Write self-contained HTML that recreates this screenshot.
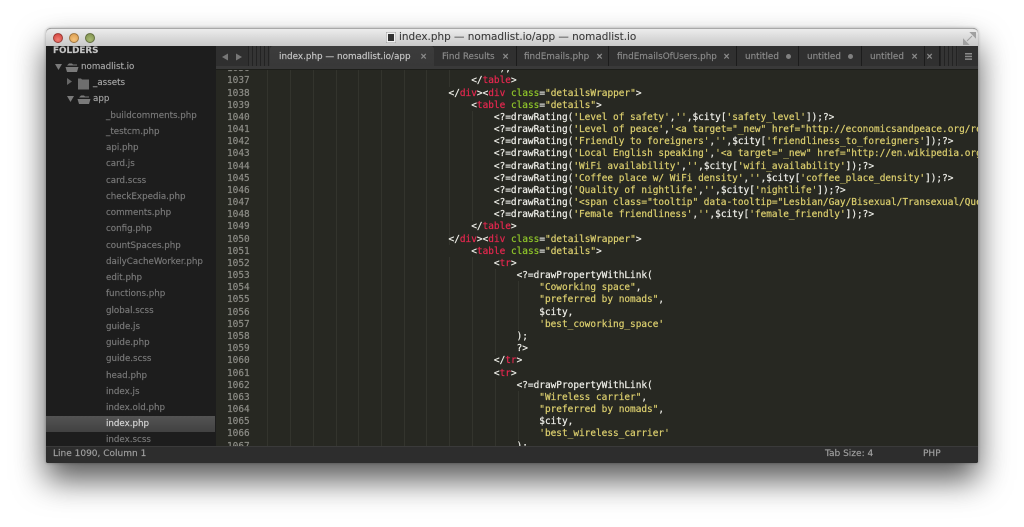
<!DOCTYPE html>
<html><head><meta charset="utf-8"><style>
*{margin:0;padding:0;box-sizing:border-box}
html,body{width:1024px;height:527px;overflow:hidden;background:#fff}
#all{position:absolute;left:0;top:0;width:1024px;height:527px;filter:blur(.3px)}
#w{position:absolute;left:46px;top:28px;width:932px;height:435px;border-radius:5px 5px 2px 2px;box-shadow:0 17px 32px rgba(0,0,0,.66),0 0 3px rgba(0,0,0,.3);background:#272822}
#tb{position:absolute;left:46px;top:28px;width:932px;height:19px;border-radius:5px 5px 0 0;background:linear-gradient(#ececec,#c9c9c9);border-top:1px solid #a8a8a8;border-bottom:1px solid #6f6f6f}
.tl{position:absolute;top:33px;width:10px;height:10px;border-radius:50%;border:1px solid rgba(0,0,0,.3)}
#title{position:absolute;left:399px;top:30px;font:10.45px/15px "DejaVu Sans",sans-serif;color:#3a3a3a;white-space:pre;-webkit-text-stroke:.1px}
#sb{position:absolute;left:46px;top:46px;width:170px;height:400px;background:#1d1d1d;overflow:hidden}
#sb div{position:absolute;white-space:pre;font:8.7px/14px "DejaVu Sans",sans-serif;color:#7a7a7a;-webkit-text-stroke:.15px}
#sb .sel{position:absolute;left:0;top:370px;width:169px;height:16px;background:linear-gradient(#535353,#414141)}
#sb .f{left:60px}
#tabs{position:absolute;left:216px;top:46px;width:762px;height:24px;background:#2a2a2a;overflow:hidden}
#tabs .bot{position:absolute;left:0;bottom:0;width:100%;height:4px;background:#393939;border-bottom:1px solid #1d1e1a}
#tabs .t,#tabs .x{position:absolute;white-space:pre;font:8.8px/14px "DejaVu Sans",sans-serif;top:4px;color:#8b8b8b;-webkit-text-stroke:.15px}
#tabs .x{font-weight:bold;font-size:8.5px}
.tab{position:absolute;top:0;height:20px;background:#303030;border-right:1px solid #1c1c1c}
#code{position:absolute;left:216px;top:70px;width:762px;height:376px;overflow:hidden;background:#272822}
#ln,#cd{position:absolute;top:-6.8px;white-space:pre;font:9.44px/12.17px "DejaVu Sans Mono",monospace;-webkit-text-stroke:.2px}
#ln{left:11px;color:#8c8c86}
#cd{left:51px;color:#f0f0ea}
.g{position:absolute;width:1px;background:#33342d}
i{font-style:normal;color:#e6274f}
b{font-weight:normal;color:#8fc52a}
u{text-decoration:none;color:#dccf6e}
#st{position:absolute;left:46px;top:446px;width:932px;height:17px;background:#2d2d2d;border-top:1px solid #3a3a3a;border-radius:0 0 2px 2px}
#st span{position:absolute;top:0;font:9px/15px "DejaVu Sans",sans-serif;color:#a0a0a0;white-space:pre;-webkit-text-stroke:.15px}
</style></head><body><div id="all">
<div id="w"></div>
<div id="tb"></div>
<div class="tl" style="left:53px;background:radial-gradient(circle at 50% 70%,#f27d72,#cf3f3a)"></div>
<div class="tl" style="left:69px;background:radial-gradient(circle at 50% 70%,#f4c27a,#d99a4c)"></div>
<div class="tl" style="left:85px;background:radial-gradient(circle at 50% 70%,#a9ba72,#7d8e4c)"></div>
<svg style="position:absolute;left:386px;top:32px" width="10" height="11"><rect x="0" y="0" width="10" height="11" fill="#f2f2f2" stroke="#999"/><rect x="2" y="2" width="6" height="7" fill="#333"/></svg>
<div id="title">index.php — nomadlist.io/app — nomadlist.io</div>
<svg style="position:absolute;left:963px;top:32px" width="13" height="13"><path d="M7.5 0.5H12.5V5.5ZM0.5 7.5V12.5H5.5ZM9 4L6.5 6.5" fill="#a0a0a0" stroke="#a0a0a0"/><path d="M4 9L6.5 6.5" stroke="#a0a0a0"/></svg>

<div id="sb">
<div class="sel"></div>
<div style="left:7px;top:-2px;font-weight:bold;color:#c4c4c4;font-size:8.8px">FOLDERS</div>
<svg style="position:absolute;left:0;top:1px" width="60" height="70" fill="#7a7a7a">
<path d="M9 17H16L12.5 23Z"/><path d="M21 18.5L23 16.500H26L27 17.500H31V18.500ZM19.500 20H32.500L31 25H21Z"/>
<path d="M21 31V38L26 34.500Z" fill="#666"/><path d="M32 32H35L36 33H43V43H32Z" fill="#6e6e6e" transform="translate(0,-0.500)"/>
<path d="M21 49H28L24.500 55Z"/><path d="M33 50.500L35 48.500H38L39 49.500H43V50.500ZM31.500 52H44.500L43 57H33Z"/>
</svg>
<div style="left:35px;top:14px;color:#a6a6a6">nomadlist.io</div>
<div style="left:47px;top:30px;color:#a6a6a6">_assets</div>
<div style="left:47px;top:46px;color:#a6a6a6">app</div>
<div class="f" style="top:63px">_buildcomments.php</div>
<div class="f" style="top:79px">_testcm.php</div>
<div class="f" style="top:95px">api.php</div>
<div class="f" style="top:111px">card.js</div>
<div class="f" style="top:128px">card.scss</div>
<div class="f" style="top:144px">checkExpedia.php</div>
<div class="f" style="top:160px">comments.php</div>
<div class="f" style="top:176px">config.php</div>
<div class="f" style="top:193px">countSpaces.php</div>
<div class="f" style="top:209px">dailyCacheWorker.php</div>
<div class="f" style="top:225px">edit.php</div>
<div class="f" style="top:241px">functions.php</div>
<div class="f" style="top:258px">global.scss</div>
<div class="f" style="top:274px">guide.js</div>
<div class="f" style="top:290px">guide.php</div>
<div class="f" style="top:306px">guide.scss</div>
<div class="f" style="top:323px">head.php</div>
<div class="f" style="top:339px">index.js</div>
<div class="f" style="top:355px">index.old.php</div>
<div class="f" style="top:371px;color:#d8d8d8">index.php</div>
<div class="f" style="top:387px">index.scss</div>
</div>

<div id="tabs">
<div class="bot"></div>
<div style="position:absolute;left:0;top:0;width:32px;height:20px;background:#2f2f2f"></div>
<svg style="position:absolute;left:6px;top:7px" width="22" height="8" fill="#777"><path d="M0 4L6 0.500V7.500Z"/><path d="M14 0.500L20 4L14 7.500Z"/></svg>
<div style="position:absolute;left:32px;top:0;width:22px;height:20px;background:repeating-linear-gradient(90deg,#232323 0 1px,#343434 1px 4px)"></div>
<div style="position:absolute;left:54px;top:0;width:164px;height:20px;background:linear-gradient(#3c3c3c,#383838);border-radius:3px 3px 0 0"></div>
<div class="tab" style="left:218px;width:83px"></div>
<div class="tab" style="left:301px;width:92px"></div>
<div class="tab" style="left:393px;width:128px"></div>
<div class="tab" style="left:521px;width:62px"></div>
<div class="tab" style="left:583px;width:63px"></div>
<div class="tab" style="left:646px;width:63px"></div>
<div class="tab" style="left:709px;width:15px"></div>
<div style="position:absolute;left:724px;top:0;width:18px;height:20px;background:repeating-linear-gradient(90deg,#232323 0 1px,#343434 1px 4px)"></div>
<div style="position:absolute;left:742px;top:0;width:20px;height:20px;background:#303030"></div>
<div class="t" style="left:63px;color:#c8c8c8">index.php — nomadlist.io/app</div><div class="x" style="left:204px">×</div>
<div class="t" style="left:226px">Find Results</div><div class="x" style="left:286px">×</div>
<div class="t" style="left:308px">findEmails.php</div><div class="x" style="left:380px">×</div>
<div class="t" style="left:401px">findEmailsOfUsers.php</div><div class="x" style="left:507px">×</div>
<div class="t" style="left:529px">untitled</div>
<div style="position:absolute;left:570px;top:8px;width:5px;height:5px;border-radius:50%;background:#808080"></div>
<div class="t" style="left:591px">untitled</div>
<div style="position:absolute;left:632px;top:8px;width:5px;height:5px;border-radius:50%;background:#808080"></div>
<div class="t" style="left:654px">untitled</div><div class="x" style="left:695px">×</div>
<div class="x" style="left:710px">×</div>
<svg style="position:absolute;left:749px;top:7px" width="7" height="7" fill="#8a8a8a"><rect width="7" height="1.500"/><rect y="2.700" width="7" height="1.500"/><rect y="5.400" width="7" height="1.500"/></svg>
</div>

<div id="code">
<div class="g" style="left:51px;top:0;height:376px"></div>
<div class="g" style="left:74px;top:0;height:376px"></div>
<div class="g" style="left:97px;top:0;height:376px"></div>
<div class="g" style="left:120px;top:0;height:376px"></div>
<div class="g" style="left:142px;top:0;height:376px"></div>
<div class="g" style="left:165px;top:0;height:376px"></div>
<div class="g" style="left:188px;top:0;height:376px"></div>
<div class="g" style="left:210px;top:0;height:376px"></div>
<div class="g" style="left:233px;top:0;height:17px"></div>
<div class="g" style="left:233px;top:29px;height:146px"></div>
<div class="g" style="left:233px;top:187px;height:189px"></div>
<div class="g" style="left:256px;top:41px;height:110px"></div>
<div class="g" style="left:256px;top:187px;height:189px"></div>
<div class="g" style="left:279px;top:199px;height:86px"></div>
<div class="g" style="left:279px;top:309px;height:67px"></div>
<div class="g" style="left:302px;top:211px;height:49px"></div>
<div class="g" style="left:302px;top:321px;height:49px"></div>
<pre id="ln">1036
1037
1038
1039
1040
1041
1042
1043
1044
1045
1046
1047
1048
1049
1050
1051
1052
1053
1054
1055
1056
1057
1058
1059
1060
1061
1062
1063
1064
1065
1066
1067</pre>
<pre id="cd">                                         );
                                    &lt;/<i>table</i>&gt;
                                &lt;/<i>div</i>&gt;&lt;<i>div</i> <b>class</b>=<u>"detailsWrapper"</u>&gt;
                                    &lt;<i>table</i> <b>class</b>=<u>"details"</u>&gt;
                                        &lt;?=drawRating(<u>'Level of safety'</u>,<u>''</u>,$city[<u>'safety_level'</u>]);?&gt;
                                        &lt;?=drawRating(<u>'Level of peace'</u>,<u>'&lt;a target="_new" href="http://economicsandpeace.org/research/iep-indices-data/global-peace-index"</u>
                                        &lt;?=drawRating(<u>'Friendly to foreigners'</u>,<u>''</u>,$city[<u>'friendliness_to_foreigners'</u>]);?&gt;
                                        &lt;?=drawRating(<u>'Local English speaking'</u>,<u>'&lt;a target="_new" href="http://en.wikipedia.org/wiki/EF_English_Proficiency_Index"</u>
                                        &lt;?=drawRating(<u>'WiFi availability'</u>,<u>''</u>,$city[<u>'wifi_availability'</u>]);?&gt;
                                        &lt;?=drawRating(<u>'Coffee place w/ WiFi density'</u>,<u>''</u>,$city[<u>'coffee_place_density'</u>]);?&gt;
                                        &lt;?=drawRating(<u>'Quality of nightlife'</u>,<u>''</u>,$city[<u>'nightlife'</u>]);?&gt;
                                        &lt;?=drawRating(<u>'&lt;span class="tooltip" data-tooltip="Lesbian/Gay/Bisexual/Transexual/Queer"</u>
                                        &lt;?=drawRating(<u>'Female friendliness'</u>,<u>''</u>,$city[<u>'female_friendly'</u>]);?&gt;
                                    &lt;/<i>table</i>&gt;
                                &lt;/<i>div</i>&gt;&lt;<i>div</i> <b>class</b>=<u>"detailsWrapper"</u>&gt;
                                    &lt;<i>table</i> <b>class</b>=<u>"details"</u>&gt;
                                        &lt;<i>tr</i>&gt;
                                            &lt;?=drawPropertyWithLink(
                                                <u>"Coworking space"</u>,
                                                <u>"preferred by nomads"</u>,
                                                $city,
                                                <u>'best_coworking_space'</u>
                                            );
                                            ?&gt;
                                        &lt;/<i>tr</i>&gt;
                                        &lt;<i>tr</i>&gt;
                                            &lt;?=drawPropertyWithLink(
                                                <u>"Wireless carrier"</u>,
                                                <u>"preferred by nomads"</u>,
                                                $city,
                                                <u>'best_wireless_carrier'</u>
                                            );</pre>
</div>

<div id="st">
<span style="left:7px">Line 1090, Column 1</span>
<span style="left:779px">Tab Size: 4</span>
<span style="left:877px">PHP</span>
</div>
</div></body></html>
